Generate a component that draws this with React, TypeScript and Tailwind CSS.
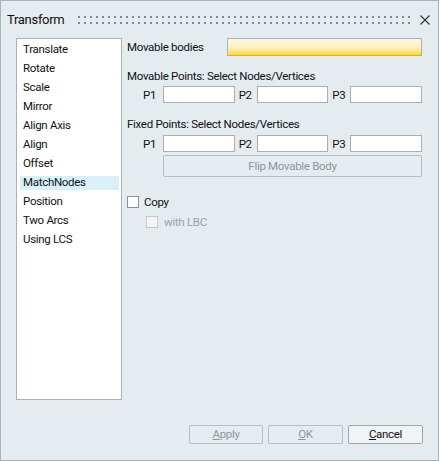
import React from "react";

const items = [
  "Translate",
  "Rotate",
  "Scale",
  "Mirror",
  "Align Axis",
  "Align",
  "Offset",
  "MatchNodes",
  "Position",
  "Two Arcs",
  "Using LCS",
];

const selected = "MatchNodes";

function PointRow() {
  return (
    <div className="flex h-[17px] items-center pl-[16px]">
      <span className="w-[20px]">P1</span>
      <div className="h-[17px] w-[72px] border border-[#a7afb7] bg-white" />
      <span className="ml-[4px] w-[18px]">P2</span>
      <div className="h-[17px] w-[72px] border border-[#a7afb7] bg-white" />
      <span className="ml-[4px] w-[18px]">P3</span>
      <div className="h-[17px] w-[72px] border border-[#a7afb7] bg-white" />
    </div>
  );
}

function Dots() {
  const cols = Array.from({ length: 56 }, (_, i) => i);
  return (
    <svg width="334" height="8" className="mt-[1px]">
      {cols.map((i) => (
        <g key={i} fill="#7f878f">
          <rect x={i * 6} y={0} width={2} height={2} />
          <rect x={i * 6} y={6} width={2} height={2} />
        </g>
      ))}
    </svg>
  );
}

export default function App() {
  return (
    <div
      className="flex h-[461px] w-[439px] flex-col border border-[#a9b1b9] bg-[#e5ecf0] text-[11.5px] tracking-[-0.3px] text-[#111]"
      style={{ fontFamily: 'Roboto, "Noto Sans", sans-serif' }}
    >
      {/* title bar */}
      <div className="flex h-[37px] items-center pl-[6px]">
        <span className="w-[71px] text-[13px] leading-none">Transform</span>
        <Dots />
        <svg width="10" height="10" viewBox="0 0 10 10" className="ml-[8px]">
          <path d="M0.5 0.5 L9.5 9.5 M9.5 0.5 L0.5 9.5" stroke="#333" strokeWidth="1.1" />
        </svg>
      </div>

      <div className="flex pl-[15px]">
        {/* list */}
        <div className="h-[362px] w-[106px] border border-[#a9b1b9] bg-white pt-[1px]">
          {items.map((it) => (
            <div key={it} className="flex h-[19px] items-center pl-[3px] pr-[2px]">
              <div
                className={`flex h-[14px] w-full items-center px-[3px] pt-[1px] leading-none ${
                  it === selected ? "bg-[#d9f0f9]" : ""
                }`}
              >
                {it}
              </div>
            </div>
          ))}
        </div>

        {/* options */}
        <div className="ml-[5px] flex w-[295px] flex-col leading-[16px]">
          <div className="flex h-[18px] items-center justify-between">
            <span>Movable bodies</span>
            <div className="h-[18px] w-[195px] border border-[#a9b1b9] bg-[linear-gradient(to_bottom,#fff6d6_0%,#fff2c4_45%,#ffe68a_75%,#ffd52e_100%)]" />
          </div>

          <div className="mt-[12px] h-[16px]">Movable Points: Select Nodes/Vertices</div>
          <div className="mt-[2px]">
            <PointRow />
          </div>

          <div className="mt-[13px] h-[16px]">Fixed Points: Select Nodes/Vertices</div>
          <div className="mt-[3px]">
            <PointRow />
          </div>

          <div className="ml-[36px] mt-[3px] flex h-[22px] items-center justify-center rounded-[2px] border border-[#b9bec3] text-[#8f969c]">
            Flip Movable Body
          </div>

          <div className="mt-[17px] flex h-[16px] items-center">
            <div className="h-[12px] w-[12px] border border-[#8a9199] bg-white" />
            <span className="ml-[5px]">Copy</span>
          </div>
          <div className="mt-[4px] flex h-[16px] items-center pl-[19px]">
            <div className="h-[12px] w-[12px] border border-[#c4c9ce] bg-[#f2f4f5]" />
            <span className="ml-[6px] text-[#9aa0a6]">with LBC</span>
          </div>
        </div>
      </div>

      {/* buttons */}
      <div className="mt-[25px] flex justify-end gap-[5px] pr-[15px] leading-none">
        <div className="flex h-[19px] w-[74px] items-center justify-center rounded-[2px] border border-[#b9bec3] text-[#8f969c]">
          <span>
            <span className="underline">A</span>pply
          </span>
        </div>
        <div className="flex h-[19px] w-[75px] items-center justify-center rounded-[2px] border border-[#b9bec3] text-[#8f969c]">
          <span>
            <span className="underline">O</span>K
          </span>
        </div>
        <div className="flex h-[19px] w-[75px] items-center justify-center rounded-[2px] border border-[#9ea5ab] bg-[#f1f4f6]">
          <span>
            <span className="underline">C</span>ancel
          </span>
        </div>
      </div>
    </div>
  );
}
